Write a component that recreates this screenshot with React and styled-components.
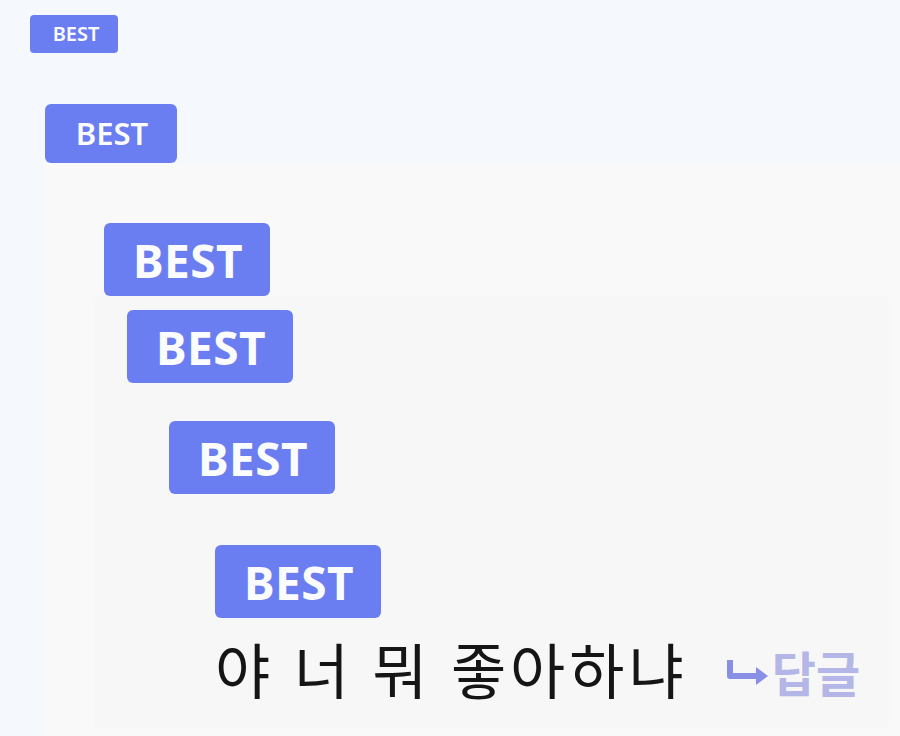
import React from "react";
import styled, { createGlobalStyle } from "styled-components";

const GlobalStyle = createGlobalStyle`
  html, body {
    margin: 0;
    padding: 0;
    background: #f5f8fd;
  }
  body {
    font-family: "Noto Sans", "Noto Sans CJK KR", sans-serif;
  }
`;

const sizes = {
  sm: { w: 88, h: 38, font: 20, weight: 600, radius: 4 },
  md: { w: 132, h: 59, font: 31, weight: 600, radius: 6 },
  lg: { w: 166, h: 73, font: 46, weight: 700, radius: 6 },
};

const Page = styled.div`
  width: 900px;
  height: 736px;
  overflow: hidden;
  padding: 15px 0 0 30px;
  box-sizing: border-box;
  display: flex;
  flex-direction: column;
  align-items: flex-start;
`;

const Badge = styled.div`
  width: ${(p) => sizes[p.size].w}px;
  height: ${(p) => sizes[p.size].h}px;
  margin-left: ${(p) => p.indent || 0}px;
  margin-top: ${(p) => p.gap || 0}px;
  flex-shrink: 0;
  border-radius: ${(p) => sizes[p.size].radius}px;
  background: #6b7ef1;
  color: #fbfcff;
  display: flex;
  align-items: center;
  justify-content: center;
  font-size: ${(p) => sizes[p.size].font}px;
  font-weight: ${(p) => sizes[p.size].weight};
  letter-spacing: ${(p) => (p.size === "lg" ? "0.5px" : "0")};
  line-height: 1;
  padding-left: ${(p) => (p.size === "sm" ? 4 : 2)}px;
  box-sizing: border-box;
`;

const Frame = styled.div`
  margin: 51px 0 0 15px;
  align-self: stretch;
  flex: 1;
  display: flex;
  flex-direction: column;
  align-items: flex-start;
`;

const OuterPanel = styled.div`
  align-self: stretch;
  flex: 1;
  background: #f9f9fa;
  padding: 60px 12px 8px 50px;
  display: flex;
  flex-direction: column;
  align-items: flex-start;
`;

const InnerPanel = styled.div`
  align-self: stretch;
  height: 430px;
  margin-top: 2px;
  background: #f7f7f7;
  box-shadow: 0 0 6px rgba(0, 0, 0, 0.015);
  padding: 12px 0 0 32px;
  box-sizing: border-box;
  display: flex;
  flex-direction: column;
  align-items: flex-start;
`;

const CommentRow = styled.div`
  margin: 20px 0 0 88px;
  display: flex;
  align-items: center;
  gap: 38px;
`;

const CommentText = styled.span`
  font-family: "Noto Sans CJK KR", sans-serif;
  font-size: 60px;
  font-weight: 400;
  line-height: 1;
  color: #151515;
  word-spacing: 2px;
  letter-spacing: 4px;
`;

const ReplyLink = styled.span`
  display: flex;
  align-items: center;
  gap: 2px;
  font-family: "Noto Sans CJK KR", sans-serif;
  font-size: 48px;
  font-weight: 700;
  line-height: 1;
  color: #b3b6e6;
  margin-top: 6px;
`;

const ReplyArrow = () => (
  <svg width="44" height="30" viewBox="0 0 44 30">
    <path
      d="M4 4 V20 H34"
      fill="none"
      stroke="#8a8fe6"
      strokeWidth="6"
      strokeLinejoin="round"
    />
    <path d="M30 11 L42 20 L30 29 Z" fill="#8a8fe6" />
  </svg>
);

const App = () => {
  return (
    <>
      <GlobalStyle />
      <Page>
        <Badge size="sm">BEST</Badge>
        <Frame>
          <Badge size="md">BEST</Badge>
          <OuterPanel>
            <Badge size="lg" indent={9}>
              BEST
            </Badge>
            <InnerPanel>
              <Badge size="lg">BEST</Badge>
              <Badge size="lg" indent={42} gap={38}>
                BEST
              </Badge>
              <Badge size="lg" indent={88} gap={51}>
                BEST
              </Badge>
              <CommentRow>
                <CommentText>야 너 뭐 좋아하냐</CommentText>
                <ReplyLink>
                  <ReplyArrow />
                  답글
                </ReplyLink>
              </CommentRow>
            </InnerPanel>
          </OuterPanel>
        </Frame>
      </Page>
    </>
  );
};

export default App;
